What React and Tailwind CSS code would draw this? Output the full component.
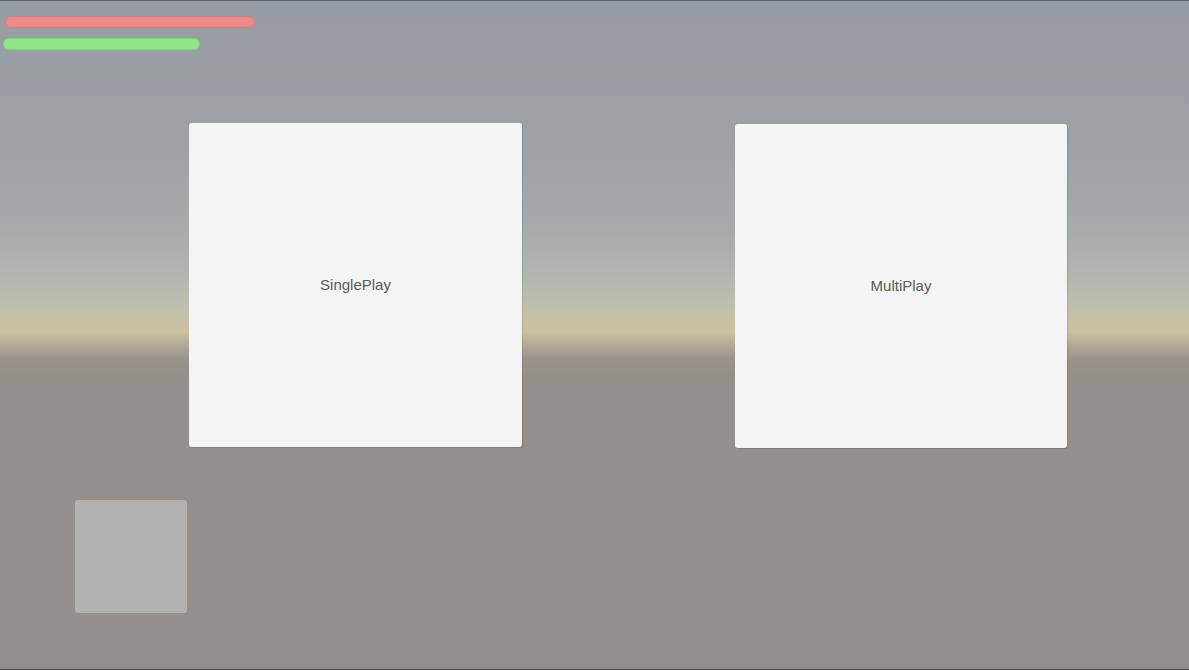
export default function App() {
  return (
    <div
      className="relative flex h-[670px] w-[1189px] flex-col overflow-hidden border-t border-b border-t-[#5d6670] border-b-[#4c4b49] bg-[linear-gradient(to_bottom,#989da3_0%,#9ca1a6_20%,#a5aaac_34%,#b3b8b0_42%,#c4c1a8_47%,#cbc09e_49.5%,#b2aa98_51.5%,#9a948d_53.5%,#958f8b_56%,#958f8b_100%)]"
      style={{ fontFamily: '"Liberation Sans", Arial, sans-serif' }}
    >
      {/* health / stamina bars */}
      <div className="flex flex-col pt-[15px]">
        <div className="ml-[5px] h-[12px] w-[250px] rounded-full border border-[#d77d7d] bg-[#ee8a8a]" />
        <div className="ml-[3px] mt-[10px] h-[12px] w-[197px] rounded-full border border-[#80d47c] bg-[#8ee88a]" />
      </div>

      {/* mode select */}
      <div className="mt-[73px] flex items-start pl-[189px]">
        <button className="flex h-[324px] w-[333px] items-center justify-center rounded-[3px] bg-[#f4f4f4] text-[15px] text-[#595959] shadow-[1px_1px_0_rgba(0,0,0,0.12)]">
          SinglePlay
        </button>
        <button className="ml-[213px] mt-[1px] flex h-[324px] w-[332px] items-center justify-center rounded-[3px] bg-[#f4f4f4] text-[15px] text-[#595959] shadow-[1px_1px_0_rgba(0,0,0,0.12)]">
          MultiPlay
        </button>
      </div>

      {/* joystick pad */}
      <div className="ml-[75px] mt-[52px] h-[113px] w-[112px] rounded-[3px] bg-[#b2b1af]" />
    </div>
  );
}
